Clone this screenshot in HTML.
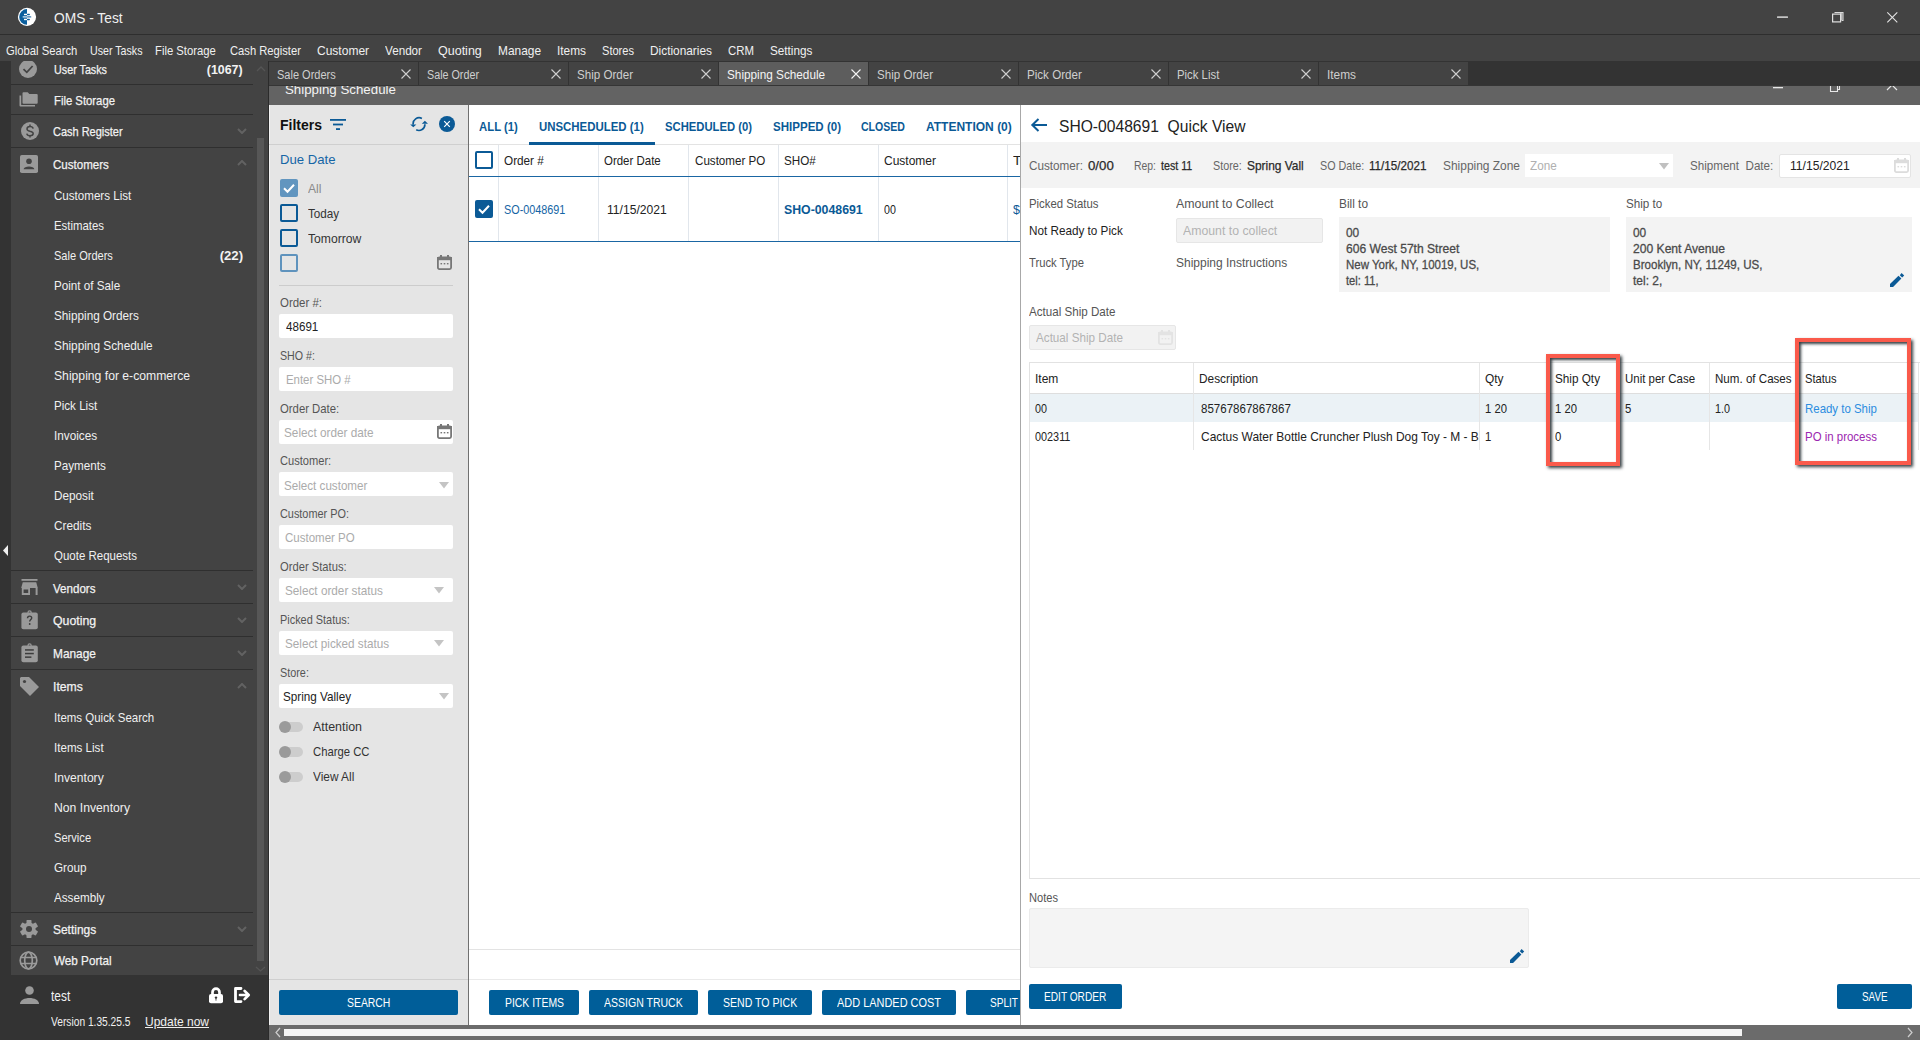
<!DOCTYPE html>
<html><head><meta charset="utf-8"><title>OMS - Test</title><style>
*{box-sizing:border-box}
html,body{margin:0;padding:0}
body{width:1920px;height:1040px;overflow:hidden;position:relative;background:#434343;font-family:"Liberation Sans",sans-serif;}
.a{position:absolute}
.t{position:absolute;white-space:nowrap;line-height:1}
</style></head><body>
<div class="a" style="left:0px;top:0px;width:1920px;height:34px;background:#434343;"></div>
<div class="a" style="left:0px;top:34px;width:1920px;height:1px;background:#2e2e2e;"></div>
<svg class="a" style="left:17px;top:7px;" width="20" height="20" viewBox="0 0 20 20"><circle cx="10" cy="9.9" r="9.1" fill="#fff"/>
 <path d="M10 2.1 A7.8 7.8 0 0 0 10 17.7 Z" fill="#0b5f9e"/>
 <rect x="7" y="6.75" width="3" height="1.4" fill="#fff"/><rect x="10" y="6.75" width="2.9" height="1.4" rx="0.6" fill="#0b5f9e"/>
 <rect x="5.7" y="9.2" width="4.3" height="1.4" fill="#c6dcec"/><rect x="10" y="9.2" width="4.3" height="1.4" rx="0.6" fill="#3276ad"/>
 <rect x="7" y="11.75" width="3" height="1.4" fill="#fff"/><rect x="10" y="11.75" width="2.9" height="1.4" rx="0.6" fill="#0b5f9e"/></svg>
<div class="t" style="left:54px;top:11.20px;font-size:14.5px;color:#f0f0f0;transform:scaleX(0.9495);transform-origin:0 0;">OMS - Test</div>
<svg class="a" style="left:1776px;top:11px;" width="124" height="13" viewBox="0 0 124 13"><rect x="1" y="5.3" width="11" height="1.6" rx="0.5" fill="#c4c4c4"/>
 <path d="M58.5 1.5h8.5v8h-1.5" fill="none" stroke="#d8d8d8" stroke-width="1.1"/><rect x="64" y="2" width="2.6" height="7" fill="#b4b4b4"/>
 <rect x="56.6" y="3.1" width="8" height="7.8" fill="none" stroke="#e0e0e0" stroke-width="1.2"/>
 <path d="M111.3 1.3 L121.3 11.3 M121.3 1.3 L111.3 11.3" stroke="#e4e4e4" stroke-width="1.1"/></svg>
<div class="a" style="left:0px;top:35px;width:1920px;height:26px;background:#434343;"></div>
<div class="t" style="left:6.3px;top:44.00px;font-size:13px;color:#f0f0f0;transform:scaleX(0.8666);transform-origin:0 0;">Global Search</div>
<div class="t" style="left:90.1px;top:44.00px;font-size:13px;color:#f0f0f0;transform:scaleX(0.8195);transform-origin:0 0;">User Tasks</div>
<div class="t" style="left:155.3px;top:44.00px;font-size:13px;color:#f0f0f0;transform:scaleX(0.8674);transform-origin:0 0;">File Storage</div>
<div class="t" style="left:230.1px;top:44.00px;font-size:13px;color:#f0f0f0;transform:scaleX(0.8607);transform-origin:0 0;">Cash Register</div>
<div class="t" style="left:317.2px;top:44.00px;font-size:13px;color:#f0f0f0;transform:scaleX(0.9244);transform-origin:0 0;">Customer</div>
<div class="t" style="left:385px;top:44.00px;font-size:13px;color:#f0f0f0;transform:scaleX(0.8980);transform-origin:0 0;">Vendor</div>
<div class="t" style="left:437.7px;top:44.00px;font-size:13px;color:#f0f0f0;transform:scaleX(0.9616);transform-origin:0 0;">Quoting</div>
<div class="t" style="left:498px;top:44.00px;font-size:13px;color:#f0f0f0;transform:scaleX(0.9152);transform-origin:0 0;">Manage</div>
<div class="t" style="left:557.3px;top:44.00px;font-size:13px;color:#f0f0f0;transform:scaleX(0.9120);transform-origin:0 0;">Items</div>
<div class="t" style="left:602px;top:44.00px;font-size:13px;color:#f0f0f0;transform:scaleX(0.8516);transform-origin:0 0;">Stores</div>
<div class="t" style="left:650px;top:44.00px;font-size:13px;color:#f0f0f0;transform:scaleX(0.9128);transform-origin:0 0;">Dictionaries</div>
<div class="t" style="left:728px;top:44.00px;font-size:13px;color:#f0f0f0;transform:scaleX(0.8781);transform-origin:0 0;">CRM</div>
<div class="t" style="left:769.6px;top:44.00px;font-size:13px;color:#f0f0f0;transform:scaleX(0.9024);transform-origin:0 0;">Settings</div>
<div class="a" style="left:0px;top:61px;width:11px;height:979px;background:#333333;"></div>
<div class="a" style="left:11px;top:61px;width:257px;height:914px;background:#434343;"></div>
<div class="a" style="left:257px;top:138px;width:7px;height:823px;background:#575757;"></div>
<svg class="a" style="left:255px;top:966px;" width="11" height="6" viewBox="0 0 11 6"><path d="M1 1 L5.5 5 L10 1" fill="none" stroke="#555" stroke-width="1.3"/></svg>
<div class="a" style="left:268px;top:61px;width:1px;height:979px;background:#2b2b2b;"></div>
<div class="a" style="left:11px;top:975px;width:257px;height:65px;background:#333333;"></div>
<div class="a" style="left:11px;top:84px;width:242px;height:1px;background:#2f2f2f;"></div>
<div class="a" style="left:11px;top:114px;width:242px;height:1px;background:#2f2f2f;"></div>
<div class="a" style="left:11px;top:147px;width:242px;height:1px;background:#2f2f2f;"></div>
<div class="a" style="left:11px;top:570px;width:242px;height:1px;background:#2f2f2f;"></div>
<div class="a" style="left:11px;top:603px;width:242px;height:1px;background:#2f2f2f;"></div>
<div class="a" style="left:11px;top:636px;width:242px;height:1px;background:#2f2f2f;"></div>
<div class="a" style="left:11px;top:669px;width:242px;height:1px;background:#2f2f2f;"></div>
<div class="a" style="left:11px;top:912px;width:242px;height:1px;background:#2f2f2f;"></div>
<div class="a" style="left:11px;top:945px;width:242px;height:1px;background:#2f2f2f;"></div>
<div class="a" style="left:11px;top:61px;width:242px;height:23px;overflow:hidden">
<svg class="a" style="left:8px;top:-1px;" width="18" height="18" viewBox="0 0 18 18"><circle cx="9" cy="9" r="9" fill="#9a9a9a"/><path d="M4.5 9.2 L7.8 12.3 L13.6 6" fill="none" stroke="#434343" stroke-width="1.8"/></svg>
</div>
<div class="t" style="left:54px;top:62.90px;font-size:13px;color:#f2f2f2;transform:scaleX(0.8273);transform-origin:0 0;-webkit-text-stroke:0.25px #f2f2f2;">User Tasks</div>
<svg class="a" style="left:256px;top:66px;" width="10" height="6" viewBox="0 0 10 6"><path d="M1 5 L5 1 L9 5" fill="none" stroke="#555" stroke-width="1.3"/></svg>
<div class="t" style="right:1677.3px;top:62.70px;font-size:13px;color:#f2f2f2;font-weight:bold;transform:scaleX(0.9527);transform-origin:100% 0;">(1067)</div>
<svg class="a" style="left:19px;top:92px;" width="19" height="15" viewBox="0 0 19 15"><path d="M4.5 0.3h4.2l1.6 1.6h7.4a1 1 0 0 1 1 1v7.9a1 1 0 0 1-1 1H4.5a1 1 0 0 1-1-1V1.3a1 1 0 0 1 1-1z" fill="#9a9a9a"/><path d="M0.5 3.5v10a1 1 0 0 0 1 1h14.5v-1.6H2.2V3.5z" fill="#9a9a9a"/></svg>
<div class="t" style="left:54px;top:93.50px;font-size:13px;color:#f2f2f2;transform:scaleX(0.8703);transform-origin:0 0;-webkit-text-stroke:0.25px #f2f2f2;">File Storage</div>
<svg class="a" style="left:20.8px;top:122px;" width="18" height="18" viewBox="0 0 18 18"><circle cx="9" cy="9" r="9" fill="#9a9a9a"/><path d="M12.2 6.6 C11.8 5.2 10.6 4.6 9 4.6 C7.2 4.6 6 5.5 6 6.9 C6 8.4 7.4 8.8 9 9.2 C10.8 9.6 12.2 10.1 12.2 11.6 C12.2 13 10.9 13.8 9 13.8 C7.3 13.8 6.1 13.1 5.8 11.7 M9 2.6 V4.6 M9 13.8 V15.6" fill="none" stroke="#434343" stroke-width="1.5"/></svg>
<div class="t" style="left:53.2px;top:124.50px;font-size:13px;color:#f2f2f2;transform:scaleX(0.8449);transform-origin:0 0;-webkit-text-stroke:0.25px #f2f2f2;">Cash Register</div>
<svg class="a" style="left:237px;top:128px;" width="10" height="6" viewBox="0 0 10 6"><path d="M1 1 L5 5 L9 1" fill="none" stroke="#626262" stroke-width="2"/></svg>
<svg class="a" style="left:20px;top:155px;" width="18" height="18" viewBox="0 0 18 18"><rect x="0" y="0" width="18" height="18" rx="1.8" fill="#9a9a9a"/><circle cx="9" cy="6.3" r="2.8" fill="#434343"/><path d="M3.6 14.3 C4 10.6 14 10.6 14.4 14.3 Z" fill="#434343"/></svg>
<div class="t" style="left:53.2px;top:157.50px;font-size:13px;color:#f2f2f2;transform:scaleX(0.8877);transform-origin:0 0;-webkit-text-stroke:0.25px #f2f2f2;">Customers</div>
<svg class="a" style="left:237px;top:160px;" width="10" height="6" viewBox="0 0 10 6"><path d="M1 5 L5 1 L9 5" fill="none" stroke="#626262" stroke-width="2"/></svg>
<div class="t" style="left:54.3px;top:189.10px;font-size:13px;color:#f0f0f0;transform:scaleX(0.8915);transform-origin:0 0;">Customers List</div>
<div class="t" style="left:54.3px;top:219.10px;font-size:13px;color:#f0f0f0;transform:scaleX(0.8760);transform-origin:0 0;">Estimates</div>
<div class="t" style="left:54.3px;top:249.10px;font-size:13px;color:#f0f0f0;transform:scaleX(0.8490);transform-origin:0 0;">Sale Orders</div>
<div class="t" style="left:54.3px;top:279.10px;font-size:13px;color:#f0f0f0;transform:scaleX(0.8980);transform-origin:0 0;">Point of Sale</div>
<div class="t" style="left:54.3px;top:309.10px;font-size:13px;color:#f0f0f0;transform:scaleX(0.9036);transform-origin:0 0;">Shipping Orders</div>
<div class="t" style="left:54.3px;top:339.10px;font-size:13px;color:#f0f0f0;transform:scaleX(0.9094);transform-origin:0 0;">Shipping Schedule</div>
<div class="t" style="left:54.3px;top:369.10px;font-size:13px;color:#f0f0f0;transform:scaleX(0.9364);transform-origin:0 0;">Shipping for e-commerce</div>
<div class="t" style="left:54.3px;top:399.10px;font-size:13px;color:#f0f0f0;transform:scaleX(0.8924);transform-origin:0 0;">Pick List</div>
<div class="t" style="left:54.3px;top:429.10px;font-size:13px;color:#f0f0f0;transform:scaleX(0.9056);transform-origin:0 0;">Invoices</div>
<div class="t" style="left:54.3px;top:459.10px;font-size:13px;color:#f0f0f0;transform:scaleX(0.8977);transform-origin:0 0;">Payments</div>
<div class="t" style="left:54.3px;top:489.10px;font-size:13px;color:#f0f0f0;transform:scaleX(0.9029);transform-origin:0 0;">Deposit</div>
<div class="t" style="left:54.3px;top:519.10px;font-size:13px;color:#f0f0f0;transform:scaleX(0.9056);transform-origin:0 0;">Credits</div>
<div class="t" style="left:54.3px;top:549.10px;font-size:13px;color:#f0f0f0;transform:scaleX(0.8834);transform-origin:0 0;">Quote Requests</div>
<div class="t" style="right:1677.3px;top:249.10px;font-size:13px;color:#f2f2f2;font-weight:bold;transform:scaleX(1.0162);transform-origin:100% 0;">(22)</div>
<svg class="a" style="left:20px;top:578px;" width="19" height="18" viewBox="0 0 19 18"><rect x="1.5" y="1" width="16" height="1.8" fill="#9a9a9a"/><path d="M2.8 4.2H16.2L17.8 10H1.2Z" fill="#9a9a9a"/><path d="M1.8 10h8.2v7H1.8z M3.6 11.6v3.4h4.6v-3.4z" fill="#9a9a9a" fill-rule="evenodd"/><rect x="15.6" y="10" width="2" height="7" fill="#9a9a9a"/></svg>
<div class="t" style="left:53.3px;top:581.50px;font-size:13px;color:#f2f2f2;transform:scaleX(0.8909);transform-origin:0 0;-webkit-text-stroke:0.25px #f2f2f2;">Vendors</div>
<svg class="a" style="left:237px;top:584px;" width="10" height="6" viewBox="0 0 10 6"><path d="M1 1 L5 5 L9 1" fill="none" stroke="#626262" stroke-width="2"/></svg>
<svg class="a" style="left:21px;top:610px;" width="17" height="20" viewBox="0 0 17 20"><rect x="0.4" y="2.6" width="16.4" height="16.6" rx="2" fill="#9a9a9a"/><circle cx="8.6" cy="2.4" r="1.6" fill="none" stroke="#9a9a9a" stroke-width="1.2"/><path d="M6.5 8.3 C6.5 6.8 7.4 6.1 8.6 6.1 C9.9 6.1 10.7 6.9 10.7 8 C10.7 9.5 8.7 9.7 8.7 11.6" fill="none" stroke="#3d3d3d" stroke-width="1.4"/><circle cx="8.7" cy="14" r="0.9" fill="#3d3d3d"/></svg>
<div class="t" style="left:53.3px;top:614.00px;font-size:13px;color:#f2f2f2;transform:scaleX(0.9485);transform-origin:0 0;-webkit-text-stroke:0.25px #f2f2f2;">Quoting</div>
<svg class="a" style="left:237px;top:617px;" width="10" height="6" viewBox="0 0 10 6"><path d="M1 1 L5 5 L9 1" fill="none" stroke="#626262" stroke-width="2"/></svg>
<svg class="a" style="left:21px;top:643px;" width="17" height="20" viewBox="0 0 17 20"><rect x="0.4" y="2.6" width="16.4" height="16.6" rx="2" fill="#9a9a9a"/><circle cx="8.6" cy="2.4" r="1.6" fill="none" stroke="#9a9a9a" stroke-width="1.2"/><rect x="4" y="6.2" width="8.8" height="1.5" fill="#3d3d3d"/><rect x="4" y="9.8" width="8.8" height="1.5" fill="#3d3d3d"/><rect x="4" y="13.4" width="6.4" height="1.5" fill="#3d3d3d"/></svg>
<div class="t" style="left:53.3px;top:647.00px;font-size:13px;color:#f2f2f2;transform:scaleX(0.9131);transform-origin:0 0;-webkit-text-stroke:0.25px #f2f2f2;">Manage</div>
<svg class="a" style="left:237px;top:650px;" width="10" height="6" viewBox="0 0 10 6"><path d="M1 1 L5 5 L9 1" fill="none" stroke="#626262" stroke-width="2"/></svg>
<svg class="a" style="left:20px;top:677px;" width="19" height="19" viewBox="0 0 19 19"><path d="M1 0h8l10 10-9 9L0 9V1z" fill="#9a9a9a"/><circle cx="4.5" cy="4.5" r="1.6" fill="#434343"/></svg>
<div class="t" style="left:53.3px;top:680.00px;font-size:13px;color:#f2f2f2;transform:scaleX(0.9372);transform-origin:0 0;-webkit-text-stroke:0.25px #f2f2f2;">Items</div>
<svg class="a" style="left:237px;top:683px;" width="10" height="6" viewBox="0 0 10 6"><path d="M1 5 L5 1 L9 5" fill="none" stroke="#626262" stroke-width="2"/></svg>
<div class="t" style="left:54.3px;top:711.10px;font-size:13px;color:#f0f0f0;transform:scaleX(0.8833);transform-origin:0 0;">Items Quick Search</div>
<div class="t" style="left:54.3px;top:741.10px;font-size:13px;color:#f0f0f0;transform:scaleX(0.8917);transform-origin:0 0;">Items List</div>
<div class="t" style="left:54.3px;top:771.10px;font-size:13px;color:#f0f0f0;transform:scaleX(0.9292);transform-origin:0 0;">Inventory</div>
<div class="t" style="left:54.3px;top:801.10px;font-size:13px;color:#f0f0f0;transform:scaleX(0.9390);transform-origin:0 0;">Non Inventory</div>
<div class="t" style="left:54.3px;top:831.10px;font-size:13px;color:#f0f0f0;transform:scaleX(0.8556);transform-origin:0 0;">Service</div>
<div class="t" style="left:54.3px;top:861.10px;font-size:13px;color:#f0f0f0;transform:scaleX(0.8993);transform-origin:0 0;">Group</div>
<div class="t" style="left:54.3px;top:891.10px;font-size:13px;color:#f0f0f0;transform:scaleX(0.8978);transform-origin:0 0;">Assembly</div>
<svg class="a" style="left:20.3px;top:919.8px;" width="18" height="18" viewBox="0 0 18 18"><g transform="translate(9 9)" fill="#9a9a9a"><circle r="6.6"/><rect x="-2.5" y="-9.1" width="5" height="4.5" rx="0.9" transform="rotate(0)"/><rect x="-2.5" y="-9.1" width="5" height="4.5" rx="0.9" transform="rotate(60)"/><rect x="-2.5" y="-9.1" width="5" height="4.5" rx="0.9" transform="rotate(120)"/><rect x="-2.5" y="-9.1" width="5" height="4.5" rx="0.9" transform="rotate(180)"/><rect x="-2.5" y="-9.1" width="5" height="4.5" rx="0.9" transform="rotate(240)"/><rect x="-2.5" y="-9.1" width="5" height="4.5" rx="0.9" transform="rotate(300)"/></g><circle cx="9" cy="9" r="3" fill="#434343"/></svg>
<div class="t" style="left:53px;top:923.00px;font-size:13px;color:#f2f2f2;transform:scaleX(0.9195);transform-origin:0 0;-webkit-text-stroke:0.25px #f2f2f2;">Settings</div>
<svg class="a" style="left:237px;top:926px;" width="10" height="6" viewBox="0 0 10 6"><path d="M1 1 L5 5 L9 1" fill="none" stroke="#626262" stroke-width="2"/></svg>
<svg class="a" style="left:19px;top:951px;" width="19" height="19" viewBox="0 0 19 19"><g fill="none" stroke="#9a9a9a" stroke-width="1.7"><circle cx="9.5" cy="9.5" r="8.3"/><ellipse cx="9.5" cy="9.5" rx="3.8" ry="8.3"/><path d="M1.5 6.5h16M1.5 12.5h16"/></g></svg>
<div class="t" style="left:53.8px;top:954.00px;font-size:13px;color:#f2f2f2;transform:scaleX(0.9005);transform-origin:0 0;-webkit-text-stroke:0.25px #f2f2f2;">Web Portal</div>
<svg class="a" style="left:3px;top:545px;" width="5" height="11" viewBox="0 0 5 11"><path d="M5 0 L0 5.5 L5 11z" fill="#f0f0f0"/></svg>
<svg class="a" style="left:20px;top:986px;" width="19" height="18" viewBox="0 0 19 18"><circle cx="9.5" cy="4.5" r="4.3" fill="#9a9a9a"/><path d="M0 18 C0 10 19 10 19 18z" fill="#9a9a9a"/></svg>
<div class="t" style="left:50.8px;top:989.00px;font-size:14px;color:#f2f2f2;transform:scaleX(0.8504);transform-origin:0 0;">test</div>
<svg class="a" style="left:209px;top:987px;" width="14" height="17" viewBox="0 0 14 17"><path d="M3.5 7.5V5.2a3.5 3.5 0 0 1 7 0V7.5" fill="none" stroke="#fff" stroke-width="2.7"/><rect x="0" y="7" width="14" height="9.2" rx="2" fill="#fff"/><circle cx="7" cy="10.6" r="1.2" fill="#333"/><path d="M6.4 11 L7.6 11 L7.4 13.8 L6.6 13.8z" fill="#555"/></svg>
<svg class="a" style="left:234px;top:987px;" width="17" height="17" viewBox="0 0 17 17"><path d="M7 1.5H1.5V14.6H7" fill="none" stroke="#fff" stroke-width="2.8" stroke-linejoin="round" stroke-linecap="round"/><path d="M6 8H14.6M10.6 3.9L14.7 8L10.6 12.1" fill="none" stroke="#fff" stroke-width="2.7" stroke-linecap="round" stroke-linejoin="round"/></svg>
<div class="t" style="left:51px;top:1015.70px;font-size:12px;color:#f0f0f0;transform:scaleX(0.8511);transform-origin:0 0;">Version 1.35.25.5</div>
<div class="t" style="left:145px;top:1014.70px;font-size:13px;color:#f0f0f0;transform:scaleX(0.9223);transform-origin:0 0;text-decoration:underline">Update now</div>
<div class="a" style="left:269px;top:61px;width:1651px;height:24px;background:#333333;"></div>
<div class="a" style="left:269px;top:62px;width:149px;height:23px;background:#434343;"></div>
<div class="t" style="left:277px;top:69.10px;font-size:12px;color:#cfcfcf;transform:scaleX(0.9183);transform-origin:0 0;">Sale Orders</div>
<svg class="a" style="left:401px;top:69px;" width="10" height="10" viewBox="0 0 10 10"><path d="M0.5 0.5 L9.5 9.5 M9.5 0.5 L0.5 9.5" stroke="#cfcfcf" stroke-width="1.1"/></svg>
<div class="a" style="left:419px;top:62px;width:149px;height:23px;background:#434343;"></div>
<div class="t" style="left:427px;top:69.10px;font-size:12px;color:#cfcfcf;transform:scaleX(0.8961);transform-origin:0 0;">Sale Order</div>
<svg class="a" style="left:551px;top:69px;" width="10" height="10" viewBox="0 0 10 10"><path d="M0.5 0.5 L9.5 9.5 M9.5 0.5 L0.5 9.5" stroke="#cfcfcf" stroke-width="1.1"/></svg>
<div class="a" style="left:569px;top:62px;width:149px;height:23px;background:#434343;"></div>
<div class="t" style="left:577px;top:69.10px;font-size:12px;color:#cfcfcf;transform:scaleX(0.9650);transform-origin:0 0;">Ship Order</div>
<svg class="a" style="left:701px;top:69px;" width="10" height="10" viewBox="0 0 10 10"><path d="M0.5 0.5 L9.5 9.5 M9.5 0.5 L0.5 9.5" stroke="#cfcfcf" stroke-width="1.1"/></svg>
<div class="a" style="left:719px;top:62px;width:149px;height:23px;background:#5d5d5d;"></div>
<div class="t" style="left:727px;top:69.10px;font-size:12px;color:#f4f4f4;transform:scaleX(0.9802);transform-origin:0 0;">Shipping Schedule</div>
<svg class="a" style="left:851px;top:69px;" width="10" height="10" viewBox="0 0 10 10"><path d="M0.5 0.5 L9.5 9.5 M9.5 0.5 L0.5 9.5" stroke="#f4f4f4" stroke-width="1.1"/></svg>
<div class="a" style="left:869px;top:62px;width:149px;height:23px;background:#434343;"></div>
<div class="t" style="left:877px;top:69.10px;font-size:12px;color:#cfcfcf;transform:scaleX(0.9650);transform-origin:0 0;">Ship Order</div>
<svg class="a" style="left:1001px;top:69px;" width="10" height="10" viewBox="0 0 10 10"><path d="M0.5 0.5 L9.5 9.5 M9.5 0.5 L0.5 9.5" stroke="#cfcfcf" stroke-width="1.1"/></svg>
<div class="a" style="left:1019px;top:62px;width:149px;height:23px;background:#434343;"></div>
<div class="t" style="left:1027px;top:69.10px;font-size:12px;color:#cfcfcf;transform:scaleX(0.9667);transform-origin:0 0;">Pick Order</div>
<svg class="a" style="left:1151px;top:69px;" width="10" height="10" viewBox="0 0 10 10"><path d="M0.5 0.5 L9.5 9.5 M9.5 0.5 L0.5 9.5" stroke="#cfcfcf" stroke-width="1.1"/></svg>
<div class="a" style="left:1169px;top:62px;width:149px;height:23px;background:#434343;"></div>
<div class="t" style="left:1177px;top:69.10px;font-size:12px;color:#cfcfcf;transform:scaleX(0.9466);transform-origin:0 0;">Pick List</div>
<svg class="a" style="left:1301px;top:69px;" width="10" height="10" viewBox="0 0 10 10"><path d="M0.5 0.5 L9.5 9.5 M9.5 0.5 L0.5 9.5" stroke="#cfcfcf" stroke-width="1.1"/></svg>
<div class="a" style="left:1319px;top:62px;width:149px;height:23px;background:#434343;"></div>
<div class="t" style="left:1327px;top:69.10px;font-size:12px;color:#cfcfcf;transform:scaleX(0.9883);transform-origin:0 0;">Items</div>
<svg class="a" style="left:1451px;top:69px;" width="10" height="10" viewBox="0 0 10 10"><path d="M0.5 0.5 L9.5 9.5 M9.5 0.5 L0.5 9.5" stroke="#cfcfcf" stroke-width="1.1"/></svg>
<div class="a" style="left:269px;top:85px;width:1651px;height:1px;background:#353535;"></div>
<div class="a" style="left:269px;top:86px;width:1651px;height:19px;background:#636363;"></div>
<div class="a" style="left:269px;top:86px;width:1651px;height:19px;overflow:hidden">
<div class="t" style="left:16px;top:-3.5px;font-size:13.3px;color:#f4f4f4">Shipping Schedule</div>
<svg class="a" style="left:1504px;top:-5px" width="130" height="12" viewBox="0 0 130 12"><rect x="0" y="6" width="10" height="1.3" fill="#e8e8e8"/><path d="M57.5 3.5h7v7h-7z M59.5 3.5v-2h7v7h-2" fill="none" stroke="#e8e8e8" stroke-width="1.1"/><path d="M114 -1 L124 9 M124 -1 L114 9" stroke="#e8e8e8" stroke-width="1.2"/></svg>
</div>
<div class="a" style="left:269px;top:105px;width:200px;height:920px;background:#e5e5e5;"></div>
<div class="a" style="left:269px;top:105px;width:1px;height:920px;background:#f2f2f2;"></div>
<div class="a" style="left:468px;top:105px;width:1px;height:920px;background:#707070;"></div>
<div class="t" style="left:279.5px;top:116.70px;font-size:15.4px;color:#111;font-weight:bold;transform:scaleX(0.9093);transform-origin:0 0;">Filters</div>
<svg class="a" style="left:330px;top:118.5px;" width="17" height="12" viewBox="0 0 17 12"><g fill="#0b5a96"><rect x="0" y="0" width="16" height="1.8"/><rect x="3" y="4.6" width="10" height="1.8"/><rect x="6" y="9.2" width="4" height="1.8"/></g></svg>
<svg class="a" style="left:409px;top:116px;" width="20" height="16" viewBox="0 0 20 16"><g fill="none" stroke="#0b5a96" stroke-width="1.7"><path d="M12.9 2.4 A6 6 0 0 0 4.2 8.6"/><path d="M7.2 13.8 A6 6 0 0 0 15.9 8.3"/></g><path d="M1.2 8.4 L7.4 8.4 L4.3 11.3z" fill="#0b5a96"/><path d="M12.8 7.8 L19 7.8 L15.9 4.8z" fill="#0b5a96"/></svg>
<svg class="a" style="left:439px;top:116px;" width="16" height="16" viewBox="0 0 16 16"><circle cx="8" cy="8" r="8" fill="#0b5a96"/><path d="M5.2 5.2 L10.8 10.8 M10.8 5.2 L5.2 10.8" stroke="#fff" stroke-width="1.2"/></svg>
<div class="a" style="left:269px;top:144px;width:199px;height:1px;background:#cfcfcf;"></div>
<div class="t" style="left:279.5px;top:153.00px;font-size:13px;color:#1565a5;transform:scaleX(1.0105);transform-origin:0 0;">Due Date</div>
<svg class="a" style="left:280px;top:179px;" width="18" height="18" viewBox="0 0 18 18"><rect x="0" y="0" width="18" height="18" rx="2" fill="#6195bf"/><path d="M4 9.3 L7.5 12.8 L14 5.8" fill="none" stroke="#fff" stroke-width="2"/></svg>
<div class="t" style="left:308px;top:181.50px;font-size:13px;color:#8a8a8a;transform:scaleX(0.9341);transform-origin:0 0;">All</div>
<div class="a" style="left:280px;top:204px;width:18px;height:18px;border:2px solid #0b5a96;border-radius:2px"></div>
<div class="t" style="left:308px;top:206.50px;font-size:13px;color:#333;transform:scaleX(0.8991);transform-origin:0 0;">Today</div>
<div class="a" style="left:280px;top:229px;width:18px;height:18px;border:2px solid #0b5a96;border-radius:2px"></div>
<div class="t" style="left:308px;top:231.50px;font-size:13px;color:#333;transform:scaleX(0.9338);transform-origin:0 0;">Tomorrow</div>
<div class="a" style="left:280px;top:254px;width:18px;height:18px;border:2px solid #5f93bd;border-radius:2px"></div>
<svg class="a" style="left:437px;top:255px;" width="15" height="15" viewBox="0 0 15 15"><rect x="0.9" y="2.4" width="13.2" height="11.7" rx="1.5" fill="none" stroke="#777" stroke-width="1.8"/><rect x="0" y="2" width="15" height="3.2" fill="#777"/><rect x="3" y="0" width="2" height="3" fill="#777"/><rect x="10" y="0" width="2" height="3" fill="#777"/><rect x="3.5" y="8" width="1.6" height="1.4" fill="#777"/><rect x="6.7" y="8" width="1.6" height="1.4" fill="#777"/><rect x="9.9" y="8" width="1.6" height="1.4" fill="#777"/></svg>
<div class="a" style="left:279px;top:285px;width:174px;height:1px;background:#cccccc;"></div>
<div class="t" style="left:279.5px;top:296.00px;font-size:13px;color:#555;transform:scaleX(0.8807);transform-origin:0 0;">Order #:</div>
<div class="a" style="left:279px;top:314.0px;width:174px;height:24px;background:#fff;border-radius:2px"></div>
<div class="t" style="left:279.5px;top:348.80px;font-size:13px;color:#555;transform:scaleX(0.8211);transform-origin:0 0;">SHO #:</div>
<div class="a" style="left:279px;top:366.8px;width:174px;height:24px;background:#fff;border-radius:2px"></div>
<div class="t" style="left:279.5px;top:401.60px;font-size:13px;color:#555;transform:scaleX(0.8716);transform-origin:0 0;">Order Date:</div>
<div class="a" style="left:279px;top:419.6px;width:174px;height:24px;background:#fff;border-radius:2px"></div>
<div class="t" style="left:279.5px;top:454.40px;font-size:13px;color:#555;transform:scaleX(0.8538);transform-origin:0 0;">Customer:</div>
<div class="a" style="left:279px;top:472.4px;width:174px;height:24px;background:#fff;border-radius:2px"></div>
<div class="t" style="left:279.5px;top:507.20px;font-size:13px;color:#555;transform:scaleX(0.8366);transform-origin:0 0;">Customer PO:</div>
<div class="a" style="left:279px;top:525.2px;width:174px;height:24px;background:#fff;border-radius:2px"></div>
<div class="t" style="left:279.5px;top:560.00px;font-size:13px;color:#555;transform:scaleX(0.8614);transform-origin:0 0;">Order Status:</div>
<div class="a" style="left:279px;top:578.0px;width:174px;height:24px;background:#fff;border-radius:2px"></div>
<div class="t" style="left:279.5px;top:612.80px;font-size:13px;color:#555;transform:scaleX(0.8393);transform-origin:0 0;">Picked Status:</div>
<div class="a" style="left:279px;top:630.8px;width:174px;height:24px;background:#fff;border-radius:2px"></div>
<div class="t" style="left:279.5px;top:665.60px;font-size:13px;color:#555;transform:scaleX(0.8332);transform-origin:0 0;">Store:</div>
<div class="a" style="left:279px;top:683.6px;width:174px;height:24px;background:#fff;border-radius:2px"></div>
<div class="t" style="left:286.3px;top:320.00px;font-size:13px;color:#222;transform:scaleX(0.8933);transform-origin:0 0;">48691</div>
<div class="t" style="left:285.5px;top:373.00px;font-size:13px;color:#ababab;transform:scaleX(0.8765);transform-origin:0 0;">Enter SHO #</div>
<div class="t" style="left:284.2px;top:426.00px;font-size:13px;color:#ababab;transform:scaleX(0.9049);transform-origin:0 0;">Select order date</div>
<svg class="a" style="left:437px;top:424px;" width="15" height="15" viewBox="0 0 15 15"><rect x="0.9" y="2.4" width="13.2" height="11.7" rx="1.5" fill="none" stroke="#777" stroke-width="1.8"/><rect x="0" y="2" width="15" height="3.2" fill="#777"/><rect x="3" y="0" width="2" height="3" fill="#777"/><rect x="10" y="0" width="2" height="3" fill="#777"/><rect x="3.5" y="8" width="1.6" height="1.4" fill="#777"/><rect x="6.7" y="8" width="1.6" height="1.4" fill="#777"/><rect x="9.9" y="8" width="1.6" height="1.4" fill="#777"/></svg>
<div class="t" style="left:284.2px;top:478.50px;font-size:13px;color:#ababab;transform:scaleX(0.8948);transform-origin:0 0;">Select customer</div>
<svg class="a" style="left:439px;top:481.5px;" width="10" height="7" viewBox="0 0 10 7"><path d="M0 0 L10 0 L5 6.6z" fill="#c4c4c4"/></svg>
<div class="t" style="left:285px;top:531.30px;font-size:13px;color:#ababab;transform:scaleX(0.8851);transform-origin:0 0;">Customer PO</div>
<div class="t" style="left:284.8px;top:583.70px;font-size:13px;color:#ababab;transform:scaleX(0.9032);transform-origin:0 0;">Select order status</div>
<svg class="a" style="left:434px;top:586.7px;" width="10" height="7" viewBox="0 0 10 7"><path d="M0 0 L10 0 L5 6.6z" fill="#c4c4c4"/></svg>
<div class="t" style="left:284.8px;top:636.60px;font-size:13px;color:#ababab;transform:scaleX(0.9003);transform-origin:0 0;">Select picked status</div>
<svg class="a" style="left:434px;top:639.6px;" width="10" height="7" viewBox="0 0 10 7"><path d="M0 0 L10 0 L5 6.6z" fill="#c4c4c4"/></svg>
<div class="t" style="left:282.9px;top:689.70px;font-size:13px;color:#222;transform:scaleX(0.8990);transform-origin:0 0;">Spring Valley</div>
<svg class="a" style="left:439px;top:692.7px;" width="10" height="7" viewBox="0 0 10 7"><path d="M0 0 L10 0 L5 6.6z" fill="#c4c4c4"/></svg>
<div class="a" style="left:282px;top:721.5px;width:21px;height:10px;background:#cdcdcd;border-radius:5px"></div>
<div class="a" style="left:279px;top:720.5px;width:12px;height:12px;border-radius:6px;background:#9a9a9a"></div>
<div class="t" style="left:313.2px;top:720.00px;font-size:13px;color:#333;transform:scaleX(0.9546);transform-origin:0 0;">Attention</div>
<div class="a" style="left:282px;top:746.5px;width:21px;height:10px;background:#cdcdcd;border-radius:5px"></div>
<div class="a" style="left:279px;top:745.5px;width:12px;height:12px;border-radius:6px;background:#9a9a9a"></div>
<div class="t" style="left:313.2px;top:745.00px;font-size:13px;color:#333;transform:scaleX(0.8688);transform-origin:0 0;">Charge CC</div>
<div class="a" style="left:282px;top:771.5px;width:21px;height:10px;background:#cdcdcd;border-radius:5px"></div>
<div class="a" style="left:279px;top:770.5px;width:12px;height:12px;border-radius:6px;background:#9a9a9a"></div>
<div class="t" style="left:313.2px;top:770.00px;font-size:13px;color:#333;transform:scaleX(0.9118);transform-origin:0 0;">View All</div>
<div class="a" style="left:269px;top:979px;width:199px;height:1px;background:#cfcfcf;"></div>
<div class="a" style="left:279px;top:990px;width:179px;height:25px;background:#005e99;border-radius:2px"></div>
<div class="t" style="left:347.2px;top:996.00px;font-size:13px;color:#fff;transform:scaleX(0.8009);transform-origin:0 0;">SEARCH</div>
<div class="a" style="left:469px;top:105px;width:551px;height:920px;background:#ffffff;"></div>
<div class="t" style="left:479.3px;top:120.70px;font-size:12.5px;color:#0b5a96;font-weight:bold;transform:scaleX(0.9083);transform-origin:0 0;">ALL (1)</div>
<div class="t" style="left:539.3px;top:120.70px;font-size:12.5px;color:#0b5a96;font-weight:bold;transform:scaleX(0.9137);transform-origin:0 0;">UNSCHEDULED (1)</div>
<div class="t" style="left:664.9px;top:120.70px;font-size:12.5px;color:#0b5a96;font-weight:bold;transform:scaleX(0.9011);transform-origin:0 0;">SCHEDULED (0)</div>
<div class="t" style="left:772.6px;top:120.70px;font-size:12.5px;color:#0b5a96;font-weight:bold;transform:scaleX(0.9234);transform-origin:0 0;">SHIPPED (0)</div>
<div class="t" style="left:861.4px;top:120.70px;font-size:12.5px;color:#0b5a96;font-weight:bold;transform:scaleX(0.8446);transform-origin:0 0;">CLOSED</div>
<div class="t" style="left:925.6px;top:120.70px;font-size:12.5px;color:#0b5a96;font-weight:bold;transform:scaleX(0.9603);transform-origin:0 0;">ATTENTION (0)</div>
<div class="a" style="left:469px;top:144px;width:551px;height:1px;background:#e3e3e3;"></div>
<div class="a" style="left:529px;top:142px;width:126px;height:3px;background:#0b5a96;"></div>
<div class="a" style="left:475px;top:151px;width:18px;height:18px;border:2px solid #0b5a96;border-radius:2px"></div>
<div class="t" style="left:504.2px;top:153.90px;font-size:13px;color:#222;transform:scaleX(0.9029);transform-origin:0 0;">Order #</div>
<div class="t" style="left:604.3px;top:153.90px;font-size:13px;color:#222;transform:scaleX(0.8816);transform-origin:0 0;">Order Date</div>
<div class="t" style="left:694.6px;top:153.90px;font-size:13px;color:#222;transform:scaleX(0.8927);transform-origin:0 0;">Customer PO</div>
<div class="t" style="left:783.6px;top:153.90px;font-size:13px;color:#222;transform:scaleX(0.8981);transform-origin:0 0;">SHO#</div>
<div class="t" style="left:884px;top:153.90px;font-size:13px;color:#222;transform:scaleX(0.9227);transform-origin:0 0;">Customer</div>
<div class="a" style="left:498px;top:145px;width:1px;height:96px;background:#e1e6ec;"></div>
<div class="a" style="left:598px;top:145px;width:1px;height:96px;background:#e1e6ec;"></div>
<div class="a" style="left:688px;top:145px;width:1px;height:96px;background:#e1e6ec;"></div>
<div class="a" style="left:778px;top:145px;width:1px;height:96px;background:#e1e6ec;"></div>
<div class="a" style="left:878px;top:145px;width:1px;height:96px;background:#e1e6ec;"></div>
<div class="a" style="left:1007px;top:145px;width:1px;height:96px;background:#e1e6ec;"></div>
<div class="a" style="left:469px;top:176px;width:551px;height:1px;background:#1a66a3;"></div>
<div class="a" style="left:469px;top:241px;width:551px;height:1px;background:#1a66a3;"></div>
<svg class="a" style="left:475px;top:200px;" width="18" height="18" viewBox="0 0 18 18"><rect x="0" y="0" width="18" height="18" rx="2" fill="#0b5a96"/><path d="M4 9.3 L7.5 12.8 L14 5.8" fill="none" stroke="#fff" stroke-width="2"/></svg>
<div class="t" style="left:503.8px;top:202.50px;font-size:13px;color:#1565a5;transform:scaleX(0.8327);transform-origin:0 0;">SO-0048691</div>
<div class="t" style="left:606.6px;top:203.00px;font-size:13px;color:#222;transform:scaleX(0.9328);transform-origin:0 0;">11/15/2021</div>
<div class="t" style="left:783.6px;top:202.50px;font-size:13px;color:#0b5a96;font-weight:bold;transform:scaleX(0.9468);transform-origin:0 0;">SHO-0048691</div>
<div class="t" style="left:884px;top:202.50px;font-size:13px;color:#222;transform:scaleX(0.8225);transform-origin:0 0;">00</div>
<div class="t" style="left:1012.5px;top:153.90px;font-size:13px;color:#222;transform:scaleX(1.0557);transform-origin:0 0;">Total</div>
<div class="t" style="left:1013px;top:202.50px;font-size:13px;color:#0b5a96;transform:scaleX(0.9574);transform-origin:0 0;">$120.00</div>
<div class="a" style="left:469px;top:949px;width:551px;height:1px;background:#e3e3e3;"></div>
<div class="a" style="left:469px;top:979px;width:551px;height:1px;background:#eaeaea;"></div>
<div class="a" style="left:489px;top:990px;width:90px;height:25px;background:#005e99;border-radius:2px"></div>
<div class="t" style="left:504.5px;top:996.00px;font-size:13px;color:#fff;transform:scaleX(0.8007);transform-origin:0 0;">PICK ITEMS</div>
<div class="a" style="left:589px;top:990px;width:109px;height:25px;background:#005e99;border-radius:2px"></div>
<div class="t" style="left:604.15px;top:996.00px;font-size:13px;color:#fff;transform:scaleX(0.8090);transform-origin:0 0;">ASSIGN TRUCK</div>
<div class="a" style="left:708px;top:990px;width:104px;height:25px;background:#005e99;border-radius:2px"></div>
<div class="t" style="left:722.9px;top:996.00px;font-size:13px;color:#fff;transform:scaleX(0.8129);transform-origin:0 0;">SEND TO PICK</div>
<div class="a" style="left:822px;top:990px;width:134px;height:25px;background:#005e99;border-radius:2px"></div>
<div class="t" style="left:837.0px;top:996.00px;font-size:13px;color:#fff;transform:scaleX(0.8419);transform-origin:0 0;">ADD LANDED COST</div>
<div class="a" style="left:966px;top:990px;width:94px;height:25px;background:#005e99;border-radius:2px"></div>
<div class="t" style="left:990px;top:996.00px;font-size:13px;color:#fff;transform:scaleX(0.7751);transform-origin:0 0;">SPLIT</div>
<div class="a" style="left:1020px;top:105px;width:1px;height:920px;background:#a8a8a8;"></div>
<div class="a" style="left:1021px;top:105px;width:899px;height:920px;background:#ffffff;"></div>
<svg class="a" style="left:1030px;top:117px;" width="18" height="16" viewBox="0 0 18 16"><path d="M17 8H2.5 M8.5 2 L2.3 8 L8.5 14" fill="none" stroke="#0b5a96" stroke-width="2"/></svg>
<div class="t" style="left:1059.25px;top:117.60px;font-size:16.4px;color:#222;transform:scaleX(0.9536);transform-origin:0 0;">SHO-0048691&nbsp; Quick View</div>
<div class="a" style="left:1021px;top:142px;width:899px;height:46px;background:#f3f3f3;"></div>
<div class="t" style="left:1029.25px;top:158.80px;font-size:13px;color:#666;transform:scaleX(0.9005);transform-origin:0 0;">Customer:</div>
<div class="t" style="left:1088px;top:158.80px;font-size:13px;color:#2a2a2a;transform:scaleX(1.0173);transform-origin:0 0;-webkit-text-stroke:0.25px #2a2a2a;">0/00</div>
<div class="t" style="left:1134.25px;top:158.80px;font-size:13px;color:#666;transform:scaleX(0.8009);transform-origin:0 0;">Rep:</div>
<div class="t" style="left:1161.25px;top:158.80px;font-size:13px;color:#2a2a2a;transform:scaleX(0.8210);transform-origin:0 0;-webkit-text-stroke:0.25px #2a2a2a;">test 11</div>
<div class="t" style="left:1213.25px;top:158.80px;font-size:13px;color:#666;transform:scaleX(0.8288);transform-origin:0 0;">Store:</div>
<div class="t" style="left:1247px;top:158.80px;font-size:13px;color:#2a2a2a;transform:scaleX(0.9167);transform-origin:0 0;-webkit-text-stroke:0.25px #2a2a2a;">Spring Vall</div>
<div class="t" style="left:1320px;top:158.80px;font-size:13px;color:#666;transform:scaleX(0.8276);transform-origin:0 0;">SO Date:</div>
<div class="t" style="left:1369.25px;top:158.80px;font-size:13px;color:#2a2a2a;transform:scaleX(0.8969);transform-origin:0 0;-webkit-text-stroke:0.25px #2a2a2a;">11/15/2021</div>
<div class="t" style="left:1443px;top:158.80px;font-size:13px;color:#666;transform:scaleX(0.9184);transform-origin:0 0;">Shipping Zone</div>
<div class="t" style="left:1690px;top:158.80px;font-size:13px;color:#666;transform:scaleX(0.8931);transform-origin:0 0;">Shipment&nbsp; Date:</div>
<div class="a" style="left:1525px;top:154px;width:148px;height:23px;background:#ffffff;"></div>
<div class="t" style="left:1530px;top:158.80px;font-size:13px;color:#b0b0b0;transform:scaleX(0.9025);transform-origin:0 0;">Zone</div>
<svg class="a" style="left:1659px;top:162.5px;" width="10" height="7" viewBox="0 0 10 7"><path d="M0 0 L10 0 L5 6.6z" fill="#c0c0c0"/></svg>
<div class="a" style="left:1779px;top:154px;width:132px;height:24px;background:#fff;border:1px solid #e4e4e4;border-radius:2px"></div>
<div class="t" style="left:1789.5px;top:158.80px;font-size:13px;color:#222;transform:scaleX(0.9320);transform-origin:0 0;">11/15/2021</div>
<svg class="a" style="left:1894px;top:158px;" width="15" height="15" viewBox="0 0 15 15"><rect x="0.9" y="2.4" width="13.2" height="11.7" rx="1.5" fill="none" stroke="#dcdcdc" stroke-width="1.8"/><rect x="0" y="2" width="15" height="3.2" fill="#dcdcdc"/><rect x="3" y="0" width="2" height="3" fill="#dcdcdc"/><rect x="10" y="0" width="2" height="3" fill="#dcdcdc"/><rect x="3.5" y="8" width="1.6" height="1.4" fill="#dcdcdc"/><rect x="6.7" y="8" width="1.6" height="1.4" fill="#dcdcdc"/><rect x="9.9" y="8" width="1.6" height="1.4" fill="#dcdcdc"/></svg>
<div class="t" style="left:1029.25px;top:196.80px;font-size:13px;color:#555;transform:scaleX(0.8742);transform-origin:0 0;">Picked Status</div>
<div class="t" style="left:1176.25px;top:196.80px;font-size:13px;color:#555;transform:scaleX(0.9502);transform-origin:0 0;">Amount to Collect</div>
<div class="t" style="left:1339.25px;top:196.80px;font-size:13px;color:#555;transform:scaleX(0.9120);transform-origin:0 0;">Bill to</div>
<div class="t" style="left:1626.25px;top:196.80px;font-size:13px;color:#555;transform:scaleX(0.8954);transform-origin:0 0;">Ship to</div>
<div class="t" style="left:1029.25px;top:224.30px;font-size:13px;color:#1e1e1e;transform:scaleX(0.9010);transform-origin:0 0;">Not Ready to Pick</div>
<div class="a" style="left:1176px;top:218px;width:147px;height:25px;background:#f2f2f2;border:1px solid #e6e6e6;border-radius:2px"></div>
<div class="t" style="left:1182.5px;top:224.30px;font-size:13px;color:#b3b3b3;transform:scaleX(0.9452);transform-origin:0 0;">Amount to collect</div>
<div class="t" style="left:1029.25px;top:255.80px;font-size:13px;color:#555;transform:scaleX(0.8651);transform-origin:0 0;">Truck Type</div>
<div class="t" style="left:1176.25px;top:255.80px;font-size:13px;color:#555;transform:scaleX(0.9218);transform-origin:0 0;">Shipping Instructions</div>
<div class="a" style="left:1339px;top:217px;width:271px;height:75px;background:#f3f3f3;"></div>
<div class="a" style="left:1626px;top:217px;width:286px;height:75px;background:#f3f3f3;"></div>
<div class="t" style="left:1346.25px;top:226.00px;font-size:13px;color:#4a4a4a;transform:scaleX(0.9158);transform-origin:0 0;-webkit-text-stroke:0.3px #4a4a4a;">00</div>
<div class="t" style="left:1346.25px;top:242.00px;font-size:13px;color:#4a4a4a;transform:scaleX(0.9291);transform-origin:0 0;-webkit-text-stroke:0.3px #4a4a4a;">606 West 57th Street</div>
<div class="t" style="left:1346.25px;top:258.00px;font-size:13px;color:#4a4a4a;transform:scaleX(0.8836);transform-origin:0 0;-webkit-text-stroke:0.3px #4a4a4a;">New York, NY, 10019, US,</div>
<div class="t" style="left:1346.25px;top:274.00px;font-size:13px;color:#4a4a4a;transform:scaleX(0.8539);transform-origin:0 0;-webkit-text-stroke:0.3px #4a4a4a;">tel: 11,</div>
<div class="t" style="left:1632.5px;top:226.00px;font-size:13px;color:#4a4a4a;transform:scaleX(0.9158);transform-origin:0 0;-webkit-text-stroke:0.3px #4a4a4a;">00</div>
<div class="t" style="left:1632.5px;top:242.00px;font-size:13px;color:#4a4a4a;transform:scaleX(0.9312);transform-origin:0 0;-webkit-text-stroke:0.3px #4a4a4a;">200 Kent Avenue</div>
<div class="t" style="left:1632.5px;top:258.00px;font-size:13px;color:#4a4a4a;transform:scaleX(0.8900);transform-origin:0 0;-webkit-text-stroke:0.3px #4a4a4a;">Brooklyn, NY, 11249, US,</div>
<div class="t" style="left:1632.5px;top:274.00px;font-size:13px;color:#4a4a4a;transform:scaleX(0.9199);transform-origin:0 0;-webkit-text-stroke:0.3px #4a4a4a;">tel: 2,</div>
<svg class="a" style="left:1889px;top:271px;" width="17" height="17" viewBox="0 0 17 17"><path d="M1 13 L9.5 4.8 L12.4 7.4 L4.1 15.9 L1 15.9z" fill="#0b5a96"/><path d="M10.8 4.3 L12.6 2 L15.2 4.5 L13.2 6.6z" fill="#0b5a96"/></svg>
<div class="t" style="left:1029.25px;top:305.30px;font-size:13px;color:#555;transform:scaleX(0.8932);transform-origin:0 0;">Actual Ship Date</div>
<div class="a" style="left:1029px;top:325px;width:147px;height:25px;background:#f2f2f2;border:1px solid #e6e6e6;border-radius:2px"></div>
<div class="t" style="left:1036.25px;top:331.00px;font-size:13px;color:#b3b3b3;transform:scaleX(0.8984);transform-origin:0 0;">Actual Ship Date</div>
<svg class="a" style="left:1158px;top:330px;" width="15" height="15" viewBox="0 0 15 15"><rect x="0.9" y="2.4" width="13.2" height="11.7" rx="1.5" fill="none" stroke="#e3e3e3" stroke-width="1.8"/><rect x="0" y="2" width="15" height="3.2" fill="#e3e3e3"/><rect x="3" y="0" width="2" height="3" fill="#e3e3e3"/><rect x="10" y="0" width="2" height="3" fill="#e3e3e3"/><rect x="3.5" y="8" width="1.6" height="1.4" fill="#e3e3e3"/><rect x="6.7" y="8" width="1.6" height="1.4" fill="#e3e3e3"/><rect x="9.9" y="8" width="1.6" height="1.4" fill="#e3e3e3"/></svg>
<div class="a" style="left:1029px;top:362px;width:895px;height:517px;border:1px solid #e2e2e2;border-right:none"></div>
<div class="a" style="left:1030px;top:393px;width:889px;height:1px;background:#dedede;"></div>
<div class="a" style="left:1030px;top:394px;width:889px;height:28px;background:#ebf2f6;"></div>
<div class="a" style="left:1193px;top:363px;width:1px;height:87px;background:#e6e6e6;"></div>
<div class="a" style="left:1479px;top:363px;width:1px;height:87px;background:#e6e6e6;"></div>
<div class="a" style="left:1548px;top:363px;width:1px;height:87px;background:#e6e6e6;"></div>
<div class="a" style="left:1619px;top:363px;width:1px;height:87px;background:#e6e6e6;"></div>
<div class="a" style="left:1709px;top:363px;width:1px;height:87px;background:#e6e6e6;"></div>
<div class="a" style="left:1798px;top:363px;width:1px;height:87px;background:#e6e6e6;"></div>
<div class="a" style="left:1918px;top:363px;width:1px;height:87px;background:#e6e6e6;"></div>
<div class="t" style="left:1034.9px;top:372.10px;font-size:13px;color:#222;transform:scaleX(0.9250);transform-origin:0 0;">Item</div>
<div class="t" style="left:1199.2px;top:372.10px;font-size:13px;color:#222;transform:scaleX(0.9103);transform-origin:0 0;">Description</div>
<div class="t" style="left:1485.2px;top:372.10px;font-size:13px;color:#222;transform:scaleX(0.9192);transform-origin:0 0;">Qty</div>
<div class="t" style="left:1555.1px;top:372.10px;font-size:13px;color:#222;transform:scaleX(0.9025);transform-origin:0 0;">Ship Qty</div>
<div class="t" style="left:1625.3px;top:372.10px;font-size:13px;color:#222;transform:scaleX(0.8807);transform-origin:0 0;">Unit per Case</div>
<div class="t" style="left:1715.2px;top:372.10px;font-size:13px;color:#222;transform:scaleX(0.8909);transform-origin:0 0;">Num. of Cases</div>
<div class="t" style="left:1805px;top:372.10px;font-size:13px;color:#222;transform:scaleX(0.8573);transform-origin:0 0;">Status</div>
<div class="t" style="left:1034.9px;top:402.20px;font-size:13px;color:#222;transform:scaleX(0.8294);transform-origin:0 0;">00</div>
<div class="t" style="left:1200.9px;top:402.20px;font-size:13px;color:#222;transform:scaleX(0.8871);transform-origin:0 0;">85767867867867</div>
<div class="t" style="left:1485.2px;top:402.20px;font-size:13px;color:#222;transform:scaleX(0.8691);transform-origin:0 0;">1 20</div>
<div class="t" style="left:1555.1px;top:402.20px;font-size:13px;color:#222;transform:scaleX(0.8691);transform-origin:0 0;">1 20</div>
<div class="t" style="left:1625.3px;top:402.20px;font-size:13px;color:#222;transform:scaleX(0.8700);transform-origin:0 0;">5</div>
<div class="t" style="left:1715.2px;top:402.20px;font-size:13px;color:#222;transform:scaleX(0.8297);transform-origin:0 0;">1.0</div>
<div class="t" style="left:1805px;top:402.20px;font-size:13px;color:#2b8de0;transform:scaleX(0.8804);transform-origin:0 0;">Ready to Ship</div>
<div class="a" style="left:1194px;top:425px;width:285px;height:25px;overflow:hidden">
<div class="t" style="left:7px;top:4.80px;font-size:13px;color:#222;transform:scaleX(0.9200);transform-origin:0 0;">Cactus Water Bottle Cruncher Plush Dog Toy - M - Blue</div>
</div>
<div class="t" style="left:1034.9px;top:429.80px;font-size:13px;color:#222;transform:scaleX(0.8345);transform-origin:0 0;">002311</div>
<div class="t" style="left:1485.2px;top:429.80px;font-size:13px;color:#222;transform:scaleX(0.8700);transform-origin:0 0;">1</div>
<div class="t" style="left:1555.1px;top:429.80px;font-size:13px;color:#222;transform:scaleX(0.8700);transform-origin:0 0;">0</div>
<div class="t" style="left:1805px;top:429.80px;font-size:13px;color:#9c27b0;transform:scaleX(0.8805);transform-origin:0 0;">PO in process</div>
<div class="a" style="left:1546px;top:354px;width:74px;height:112px;border:4px solid #fa5a4b;box-shadow:2px 2px 3px rgba(20,30,35,0.85), inset 2px 2px 3px rgba(20,30,35,0.85)"></div>
<div class="a" style="left:1795px;top:338px;width:116px;height:127px;border:4px solid #fa5a4b;box-shadow:2px 2px 3px rgba(20,30,35,0.85), inset 2px 2px 3px rgba(20,30,35,0.85)"></div>
<div class="t" style="left:1029.4px;top:891.10px;font-size:13px;color:#555;transform:scaleX(0.8537);transform-origin:0 0;">Notes</div>
<div class="a" style="left:1029px;top:908px;width:500px;height:60px;background:#f4f4f4;border:1px solid #ebebeb;border-radius:2px"></div>
<svg class="a" style="left:1509px;top:947px;" width="17" height="17" viewBox="0 0 17 17"><path d="M1 13 L9.5 4.8 L12.4 7.4 L4.1 15.9 L1 15.9z" fill="#0b5a96"/><path d="M10.8 4.3 L12.6 2 L15.2 4.5 L13.2 6.6z" fill="#0b5a96"/></svg>
<div class="a" style="left:1029px;top:984px;width:93px;height:25px;background:#005e99;border-radius:2px"></div>
<div class="t" style="left:1044.4px;top:990.00px;font-size:13px;color:#fff;transform:scaleX(0.7794);transform-origin:0 0;">EDIT ORDER</div>
<div class="a" style="left:1837px;top:984px;width:75px;height:25px;background:#005e99;border-radius:2px"></div>
<div class="t" style="left:1862.25px;top:990.00px;font-size:13px;color:#fff;transform:scaleX(0.7592);transform-origin:0 0;">SAVE</div>
<div class="a" style="left:269px;top:1025px;width:1651px;height:15px;background:#6b6b6b;"></div>
<div class="a" style="left:284px;top:1029px;width:1458px;height:7px;background:#f4f4f4;"></div>
<svg class="a" style="left:274px;top:1027px;" width="8" height="11" viewBox="0 0 8 11"><path d="M6 1 L2 5.5 L6 10" fill="none" stroke="#cfcfcf" stroke-width="1.2"/></svg>
<svg class="a" style="left:1906px;top:1027px;" width="8" height="11" viewBox="0 0 8 11"><path d="M2 1 L6 5.5 L2 10" fill="none" stroke="#cfcfcf" stroke-width="1.2"/></svg>
</body></html>
